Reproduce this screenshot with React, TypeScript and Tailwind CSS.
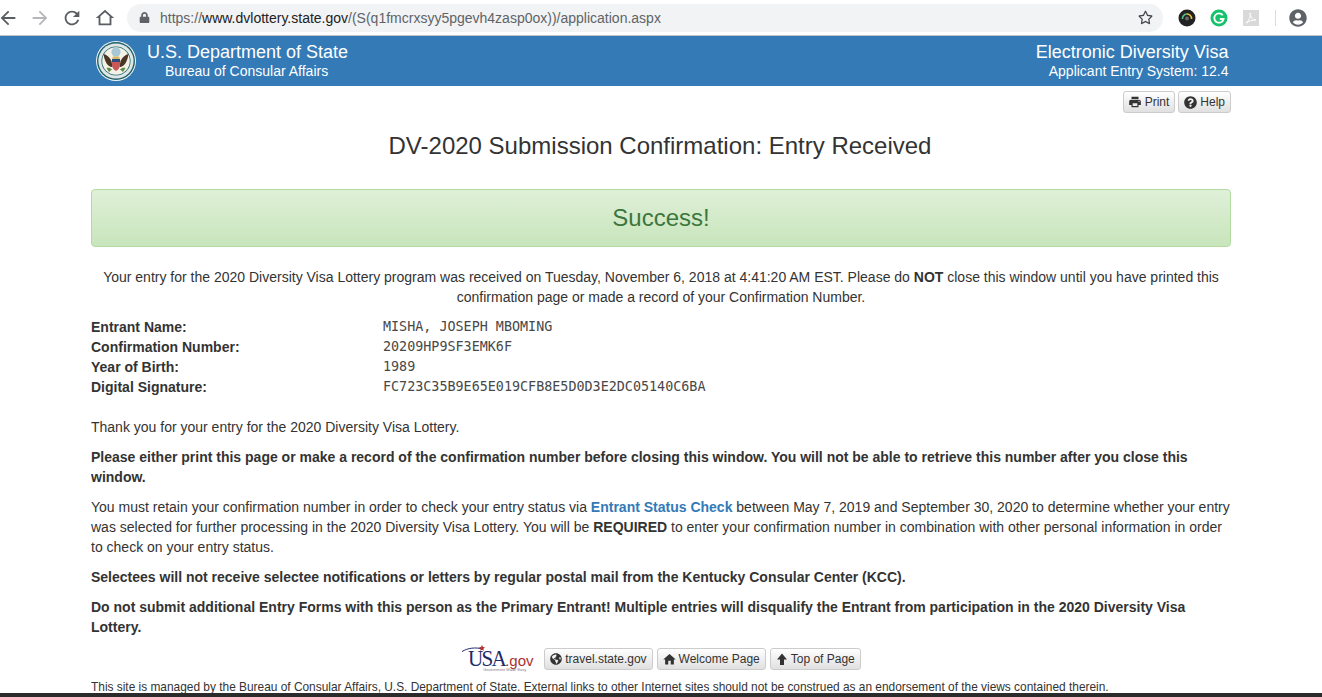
import { FaQuestionCircle, FaGlobeAmericas, FaLock, FaRegStar, FaUserCircle } from 'react-icons/fa'
import { MdHome, MdPrint } from 'react-icons/md'

const entrant = [
    { label: 'Entrant Name:', value: 'MISHA, JOSEPH MBOMING' },
    { label: 'Confirmation Number:', value: '20209HP9SF3EMK6F' },
    { label: 'Year of Birth:', value: '1989' },
    { label: 'Digital Signature:', value: 'FC723C35B9E65E019CFB8E5D0D3E2DC05140C6BA' },
]

const Seal = () => (
    <svg width="40" height="40" viewBox="0 0 40 40" aria-hidden="true">
        <circle cx="20" cy="20" r="20" fill="#f2f5f3" />
        <circle cx="20" cy="20" r="19" fill="#1f6069" />
        <circle cx="20" cy="20" r="17.6" fill="#dfe7e6" />
        <circle cx="20" cy="20" r="14.6" fill="#276a70" />
        <circle cx="20" cy="20" r="13.8" fill="#f4f2e6" />
        <circle cx="20" cy="11" r="4.6" fill="#a9c8d6" />
        <path d="M7.5 13c3 .5 6 3 8 7l1 6c-4 .5-8-5-9-13zM32.500 13c-3 .5-6 3-8 7l-1 6c4 .5 8-5 9-13z" fill="#4d3524" />
        <path d="M17 15.500h6l1 2-4 1-4-1z" fill="#d8b763" />
        <path d="M16 18h8v6c0 3-2 5-4 6-2-1-4-3-4-6z" fill="#c9575a" />
        <path d="M16 18h8v3h-8z" fill="#2b4a80" />
        <path d="M10.500 27c2-.5 4 0 5.500 1.500l-3 2.500zM29.500 27c-2-.5-4 0-5.500 1.500l3 2.500z" fill="#5b8a4a" />
    </svg>
)

const ToolbarIcon = ({ d, className }: { d: string; className: string }) => (
    <svg width="22" height="22" viewBox="0 0 24 24" className={className} fill="currentColor" fillRule="evenodd" aria-hidden="true">
        <path d={d} />
    </svg>
)

const ArrowUpGlyph = () => (
    <svg width="12" height="12" viewBox="0 0 12 12" fill="currentColor" aria-hidden="true">
        <path d="M6 0.500L11 6.500H8V12H4V6.500H1z" />
    </svg>
)

const Chrome = () => (
    <div className="flex items-center h-[36px] bg-white border-b border-[#bfc2c6] shrink-0">
        <ToolbarIcon className="ml-[-3px] text-[#5a5d61]" d="M20 11H7.830l5.590-5.590L12 4l-8 8 8 8 1.410-1.410L7.830 13H20v-2z" />
        <ToolbarIcon className="ml-[10px] text-[#b4b6b9]" d="M4 11h12.170l-5.590-5.590L12 4l8 8-8 8-1.410-1.410L16.170 13H4v-2z" />
        <ToolbarIcon className="ml-[10px] text-[#5a5d61]" d="M17.650 6.350C16.200 4.900 14.210 4 12 4c-4.420 0-7.990 3.580-7.990 8s3.570 8 7.990 8c3.730 0 6.840-2.550 7.730-6h-2.080c-.82 2.330-3.040 4-5.650 4-3.310 0-6-2.690-6-6s2.690-6 6-6c1.660 0 3.140.69 4.220 1.780L13 11h7V4l-2.350 2.350z" />
        <ToolbarIcon className="ml-[11px] text-[#5a5d61]" d="M12 5.690l5 4.500V18H7v-7.810l5-4.500zM12 3L2 12h3v8h14v-8h3L12 3z" />
        <div className="flex items-center ml-[11px] w-[1036px] h-[28px] rounded-full bg-[#f1f3f4] pl-[12px] text-[14px]">
            <FaLock size={11} className="text-[#5f6368]" />
            <span className="ml-[10px] text-[#5f6368]">https://</span>
            <span className="text-[#202124]">www.dvlottery.state.gov</span>
            <span className="text-[#5f6368]">/(S(q1fmcrxsyy5pgevh4zasp0ox))/application.aspx</span>
            <FaRegStar size={15} className="ml-auto mr-[10px] text-[#44474a]" />
        </div>
        {/* extensions */}
        <svg width="18" height="18" viewBox="0 0 18 18" className="ml-[15px]" aria-hidden="true">
            <circle cx="9" cy="9" r="8.500" fill="#222" />
            <path d="M4.500 10a4.500 4.500 0 0 1 4-5" fill="none" stroke="#4cc38a" strokeWidth="1.600" />
            <path d="M8.500 5a4.500 4.500 0 0 1 5 5" fill="none" stroke="#e8c23a" strokeWidth="1.600" />
            <circle cx="9" cy="9.500" r="2" fill="#666" />
        </svg>
        <svg width="18" height="18" viewBox="0 0 18 18" className="ml-[14px]" aria-hidden="true">
            <circle cx="9" cy="9" r="8.500" fill="#15c26b" />
            <path d="M12.800 6.200A4.700 4.700 0 1 0 13.600 10H9.800" fill="none" stroke="#fff" strokeWidth="1.800" />
        </svg>
        <svg width="16" height="16" viewBox="0 0 16 16" className="ml-[15px]" aria-hidden="true">
            <rect width="16" height="16" fill="#d9d9d9" />
            <path d="M3 13c3-2 5-7 4-10 0 4 3 7 6 7-4 0-7 1-10 3z" fill="none" stroke="#fff" strokeWidth="1" />
        </svg>
        <div className="ml-[16px] w-px h-[16px] bg-[#dadce0]" />
        <FaUserCircle size={18} className="ml-[13px] text-[#5f6368]" />
    </div>
)

const SiteHeader = () => (
    <div className="flex h-[50px] bg-[#337ab7] text-white shrink-0 pl-[96px] pr-[93.5px]">
        <div className="flex items-center">
            <Seal />
        </div>
        <div className="ml-[11px] pt-[5px]">
            <div className="text-[18px] leading-[22px]">U.S. Department of State</div>
            <div className="ml-[18px] text-[14px] leading-[17px]">Bureau of Consular Affairs</div>
        </div>
        <div className="ml-auto pt-[5px] text-right">
            <div className="text-[18px] leading-[22px]">Electronic Diversity Visa</div>
            <div className="text-[14px] leading-[17px]">Applicant Entry System: 12.4</div>
        </div>
    </div>
)

const Btn = ({ icon, children }: { icon: React.ReactNode; children: React.ReactNode }) => (
    <span className="inline-flex items-center gap-[3px] h-[22px] px-[5px] rounded-[3px] border border-[#ccc] bg-gradient-to-b from-white to-[#e0e0e0] text-[12px] text-[#333] whitespace-nowrap">
        {icon}
        {children}
    </span>
)

const UsaGovLogo = () => (
    <div className="relative w-[79px] h-[26px] shrink-0 pl-[7px] flex items-baseline">
        <span className="inline-block w-[37px] origin-left scale-x-[0.88] font-['Liberation_Serif',serif] text-[24px] leading-[24px] tracking-[-2px] text-[#1d2a6b]">USA</span>
        <span className="text-[15px] leading-[24px] text-[#a8322e]">.gov</span>
        <svg width="30" height="12" viewBox="0 0 30 12" className="absolute left-0 top-[-2px]" aria-hidden="true">
            <path d="M1 7.500C7 4 14 3 22 5" fill="none" stroke="#1d2a6b" strokeWidth="1" />
            <path d="M21 1l1 2 2 .3-1.500 1.400.4 2-1.900-1-1.900 1 .4-2L18 3.300l2-.3z" fill="#b5342f" />
        </svg>
        <span className="absolute left-[22px] top-[21px] text-[4px] leading-[5px] text-[#8a7a8a] whitespace-nowrap">Government Made Easy</span>
    </div>
)

export default function App() {
    return (
        <div className="flex flex-col h-[697px] overflow-hidden bg-white text-[#333] text-[14px] leading-[20px] font-['Liberation_Sans',Arial,sans-serif]">
            <Chrome />
            <SiteHeader />

            <div className="relative flex-1 w-[1140px] ml-[91px] overflow-hidden">
                {/* print + help */}
                <div className="flex justify-end gap-[3px] pt-[5px]">
                    <Btn icon={<MdPrint size={14} className="mx-[-0.5px]" />}>Print</Btn>
                    <Btn icon={<FaQuestionCircle size={13} />}>Help</Btn>
                </div>

                <h1 className="mt-[20px] pr-[2px] text-center text-[24px] leading-[26px] font-normal">
                    DV-2020 Submission Confirmation: Entry Received
                </h1>

                <div className="mt-[30px] h-[58px] flex items-center justify-center rounded-[4px] border border-[#b2dba1] bg-gradient-to-b from-[#dff0d8] to-[#c8e5bc] text-[24px] text-[#3c763d]">
                    Success!
                </div>

                <p className="mt-[20px] text-center">
                    Your entry for the 2020 Diversity Visa Lottery program was received on Tuesday, November 6, 2018 at 4:41:20 AM EST. Please do <b>NOT</b> close this window until you have printed this confirmation page or made a record of your Confirmation Number.
                </p>

                {/* entrant details */}
                <div className="mt-[10px]">
                    {entrant.map((row) => (
                        <div key={row.label} className="flex h-[20px] items-center">
                            <b className="w-[292px]">{row.label}</b>
                            <span className="font-['DejaVu_Sans_Mono',monospace] text-[13.4px] text-[#484848]">{row.value}</span>
                        </div>
                    ))}
                </div>

                <p className="mt-[20px]">Thank you for your entry for the 2020 Diversity Visa Lottery.</p>
                <p className="mt-[10px] font-bold">
                    Please either print this page or make a record of the confirmation number before closing this window. You will not be able to retrieve this number after you close this window.
                </p>
                <p className="mt-[10px]">
                    You must retain your confirmation number in order to check your entry status via <b className="text-[#337ab7]">Entrant Status Check</b> between May 7, 2019 and September 30, 2020 to determine whether your entry was selected for further processing in the 2020 Diversity Visa Lottery. You will be <b>REQUIRED</b> to enter your confirmation number in combination with other personal information in order to check on your entry status.
                </p>
                <p className="mt-[10px] font-bold">
                    Selectees will not receive selectee notifications or letters by regular postal mail from the Kentucky Consular Center (KCC).
                </p>
                <p className="mt-[10px] font-bold">
                    Do not submit additional Entry Forms with this person as the Primary Entrant! Multiple entries will disqualify the Entrant from participation in the 2020 Diversity Visa Lottery.
                </p>

                <div className="flex justify-center items-center gap-[4px] mt-[11px] h-[22px]">
                    <UsaGovLogo />
                    <Btn icon={<FaGlobeAmericas size={12} />}>travel.state.gov</Btn>
                    <Btn icon={<MdHome size={15} className="mx-[-1px]" />}>Welcome Page</Btn>
                    <Btn icon={<ArrowUpGlyph />}>Top of Page</Btn>
                </div>

                <p className="mt-[9px] text-[11.9px] leading-[17px] whitespace-nowrap">
                    This site is managed by the Bureau of Consular Affairs, U.S. Department of State. External links to other Internet sites should not be construed as an endorsement of the views contained therein.
                </p>
            </div>

            <div className="h-[4px] bg-[#2b2b2b] shrink-0" />
        </div>
    )
}
